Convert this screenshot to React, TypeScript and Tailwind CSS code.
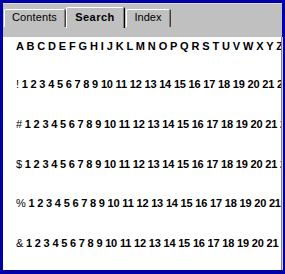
import React from "react";

const font = { fontFamily: '"Liberation Sans", Arial, sans-serif' };

function Row({ lead }: { lead: string }) {
  const nums = Array.from({ length: 30 }, (_, i) => String(i + 1)).join(" ");
  return (
    <div className="h-[13px] leading-[13px] whitespace-nowrap text-[11px] text-black tracking-[-0.19px]">
      <span className="font-normal">{lead} </span>
      <span className="font-bold">{nums}</span>
    </div>
  );
}

export default function App() {
  const letters = "A B C D E F G H I J K L M N O P Q R S T U V W X Y Z";
  return (
    <div
      className="w-[285px] h-[274px] bg-[#0000a8] pt-[3px] pl-[3px] pr-[2px] pb-[4px] flex flex-col overflow-hidden"
      style={font}
    >
      {/* header with tabs */}
      <div className="h-[34px] bg-[#c0c0c0] border-t border-[#dcdcdc] flex items-start pl-[1px] mr-[1px] shrink-0">
        <div className="mt-[5px] h-[18px] w-[62px] border-r border-[#404040] rounded-tr-[2px]">
          <div className="h-full border-l border-t border-white border-r border-r-[#808080] rounded-tl-[2px] text-[11px] leading-[13px] text-black text-center pt-[1px] tracking-[0.1px]">
            Contents
          </div>
        </div>
        <div className="mt-[3px] h-[21px] w-[59px] border-r border-black rounded-tr-[2px]">
          <div className="h-full border-l border-t border-white border-r border-r-[#808080] rounded-tl-[2px] text-[11px] leading-[13px] font-bold tracking-[0.5px] text-black text-center pt-[3px]">
            Search
          </div>
        </div>
        <div className="mt-[5px] ml-[1px] h-[18px] w-[45px] border-r border-[#404040] rounded-tr-[2px]">
          <div className="h-full border-l border-t border-white border-r border-r-[#808080] rounded-tl-[2px] text-[11px] leading-[13px] text-black text-center pt-[1px]">
            Index
          </div>
        </div>
      </div>
      {/* white content */}
      <div className="flex-1 bg-white border-r border-r-[#d4d0c8] relative overflow-hidden">
        <div className="absolute right-0 top-0 bottom-0 w-[1px] bg-[#808080]" />
        <div className="pl-[13px] pt-[3px] flex flex-col">
          <div className="h-[13px] leading-[13px] whitespace-nowrap text-[11px] font-bold text-black tracking-[-0.1px]">
            {letters}
          </div>
          <div className="mt-[25px] flex flex-col gap-[26.8px]">
            <Row lead="!" />
            <Row lead="#" />
            <Row lead="$" />
            <Row lead="%" />
            <Row lead="&" />
          </div>
        </div>
      </div>
    </div>
  );
}
